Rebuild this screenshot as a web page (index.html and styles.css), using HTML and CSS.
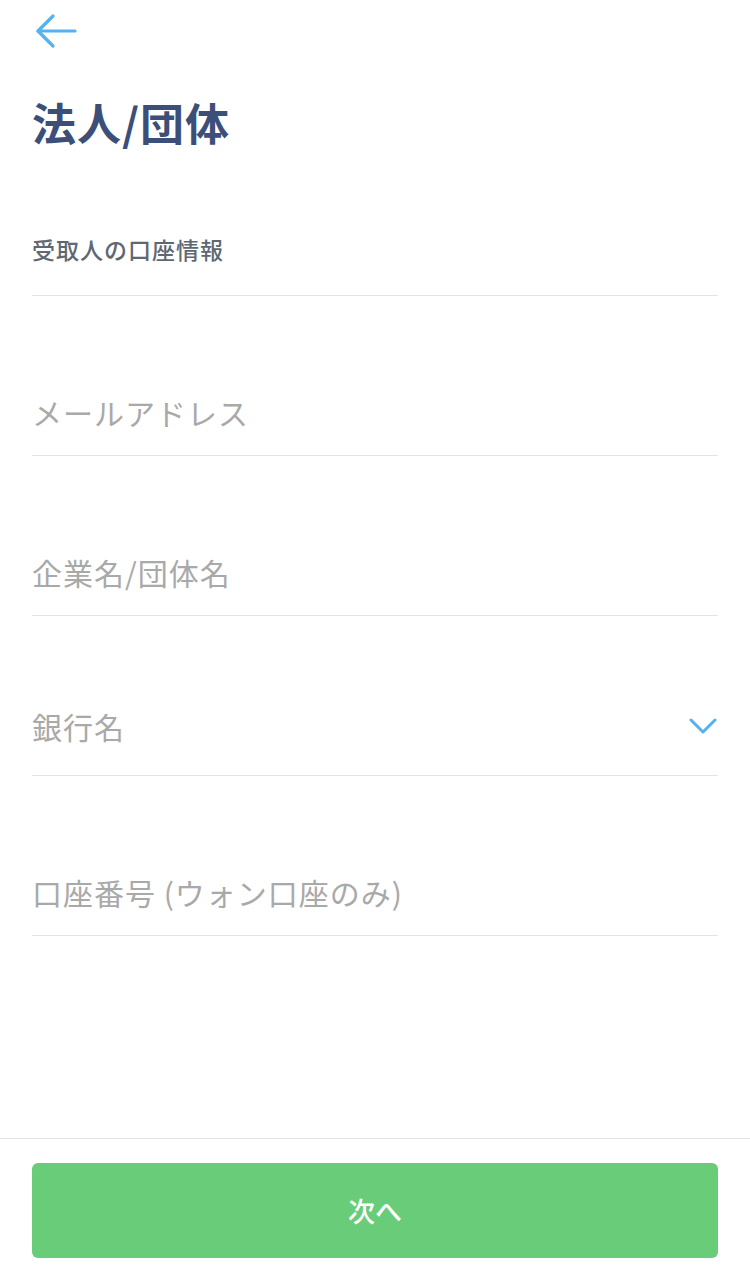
FILE: index.html
```html
<!DOCTYPE html>
<html lang="ja">
<head>
    <meta charset="UTF-8">
    <meta name="viewport" content="width=device-width, initial-scale=1.0">
    <title>法人/団体</title>
    <link rel="stylesheet" href="styles.css">
</head>
<body>

<div class="page">
    <header class="topbar">
        <button class="back-btn" aria-label="戻る">
            <svg width="42" height="36" viewBox="0 0 42 36" fill="none" stroke="#55b2ee" stroke-width="3.2" stroke-linecap="round" stroke-linejoin="round">
                <path d="M40 18 H3"/>
                <path d="M18 3 L3 18 L18 33"/>
            </svg>
        </button>
    </header>

    <main class="content">
        <h1 class="title">法人/団体</h1>

        <div class="section-label">受取人の口座情報</div>

        <div class="field">
            <input type="email" placeholder="メールアドレス">
        </div>

        <div class="field">
            <input type="text" placeholder="企業名/団体名">
        </div>

        <div class="field field-select">
            <span class="select-placeholder">銀行名</span>
            <svg class="chevron" width="28" height="18" viewBox="0 0 28 18" fill="none" stroke="#55b2ee" stroke-width="3" stroke-linecap="round" stroke-linejoin="round">
                <path d="M2 3 L14 15 L26 3"/>
            </svg>
        </div>

        <div class="field">
            <input type="text" placeholder="口座番号 (ウォン口座のみ)">
        </div>
    </main>

    <footer class="bottom-bar">
        <button class="next-btn">次へ</button>
    </footer>
</div>

</body>
</html>
```

FILE: styles.css
```css
:root {
    --title-color: #3c4f78;
    --label-color: #5e6872;
    --placeholder-color: #a9a9a9;
    --divider-color: #e1e4e6;
    --accent-color: #55b2ee;
    --button-color: #69cc79;
}

* {
    box-sizing: border-box;
}

body {
    margin: 0;
    background: #ffffff;
    font-family: "Noto Sans CJK JP", "Noto Sans", sans-serif;
}

.page {
    min-height: 100vh;
    display: flex;
    flex-direction: column;
}

.topbar {
    height: 64px;
    padding: 0 32px;
    display: flex;
    align-items: center;
}

.back-btn {
    background: none;
    border: none;
    padding: 0;
    margin-left: 3px;
    margin-top: -2px;
    display: flex;
    cursor: pointer;
}

.content {
    padding: 0 32px;
}

.title {
    margin: 28px 0 0;
    font-size: 44px;
    line-height: 60px;
    font-weight: 700;
    letter-spacing: 1px;
    color: var(--title-color);
}

.section-label {
    padding: 81px 0 30px;
    font-size: 23px;
    line-height: 32px;
    font-weight: 500;
    letter-spacing: 1px;
    color: var(--label-color);
    border-bottom: 1px solid var(--divider-color);
}

.field {
    padding: 94px 0 21px;
    border-bottom: 1px solid var(--divider-color);
}

.field input {
    display: block;
    width: 100%;
    height: 44px;
    border: none;
    outline: none;
    padding: 0;
    background: transparent;
    font-family: inherit;
    font-size: 30px;
    letter-spacing: 1px;
    color: #333333;
}

.field input::placeholder {
    color: var(--placeholder-color);
}

.field-select {
    display: flex;
    align-items: center;
    justify-content: space-between;
    padding-bottom: 27px;
    padding-top: 88px;
}

.select-placeholder {
    font-size: 30px;
    line-height: 44px;
    letter-spacing: 1px;
    color: var(--placeholder-color);
}

.chevron {
    margin-right: 1px;
}

.bottom-bar {
    margin-top: auto;
    border-top: 1px solid var(--divider-color);
    padding: 24px 32px 25px;
}

.next-btn {
    display: block;
    width: 100%;
    height: 95px;
    border: none;
    border-radius: 6px;
    background: var(--button-color);
    color: #ffffff;
    font-family: inherit;
    font-size: 27px;
    font-weight: 500;
    cursor: pointer;
}
```
